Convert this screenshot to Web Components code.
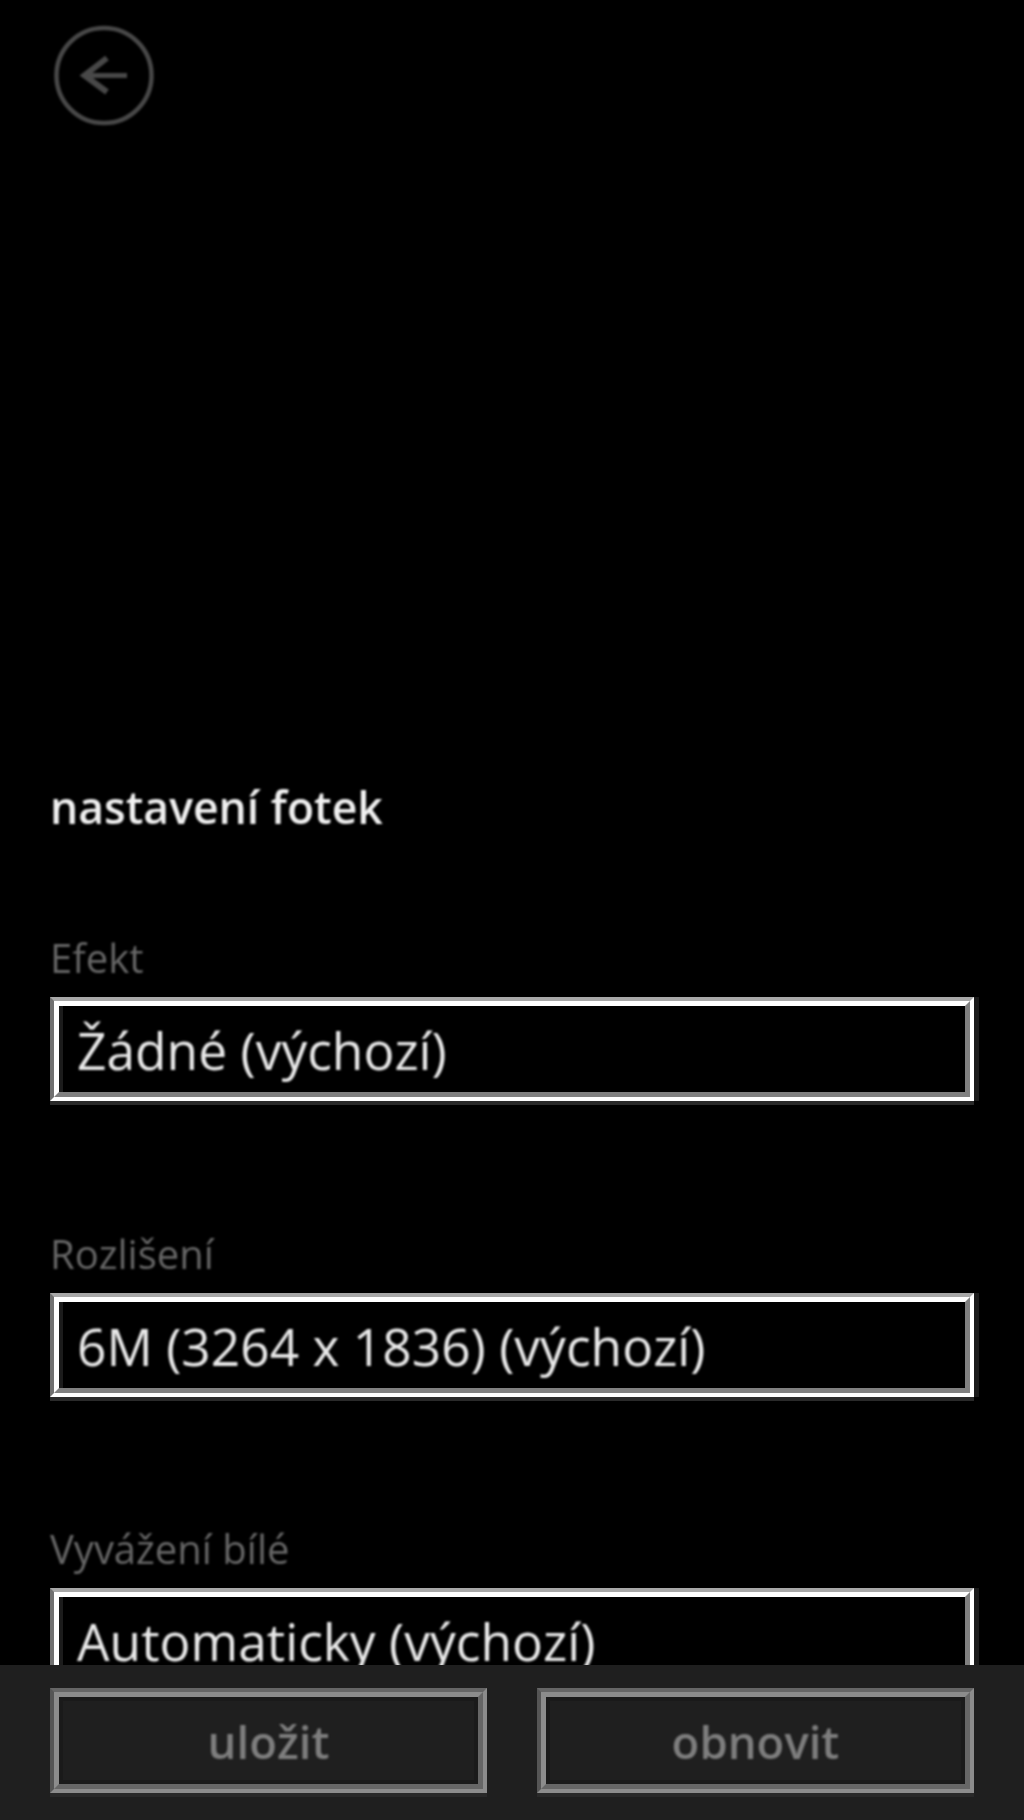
<!DOCTYPE html>
<html lang="cs">
<head>
<meta charset="utf-8">
<title>nastavení fotek</title>
<style>
html,body{margin:0;padding:0;background:#000;}
body{font-family:"Open Sans","Noto Sans",sans-serif;}
</style>
</head>
<body>
<settings-page>
  <back-button slot="header"></back-button>
  <page-title slot="title">nastavení fotek</page-title>
  <select-field slot="fields" label="Efekt">Žádné (výchozí)</select-field>
  <select-field slot="fields" label="Rozlišení">6M (3264 x 1836) (výchozí)</select-field>
  <select-field slot="fields" label="Vyvážení bílé">Automaticky (výchozí)</select-field>
  <app-button slot="actions">uložit</app-button>
  <app-button slot="actions">obnovit</app-button>
</settings-page>
<script>
function define(name, html, attrs){
  customElements.define(name, class extends HTMLElement{
    constructor(){
      super();
      this.attachShadow({mode:'open'}).innerHTML = html;
    }
    connectedCallback(){
      if(attrs) attrs(this);
    }
  });
}
define('settings-page', `
<style>
:host{display:flex;flex-direction:column;width:1024px;height:1820px;overflow:hidden;background:#000;}
.scroll{flex:0 0 1665px;height:1665px;overflow:hidden;padding:0 50px;box-sizing:border-box;}
.head{height:25px;}
.fields{display:flex;flex-direction:column;}
.bar{flex:1;background:#1f1f1f;box-sizing:border-box;padding:23px 50px 0;display:flex;gap:50px;align-items:flex-start;}
</style>
<div class="scroll">
  <div class="head"></div>
  <slot name="header"></slot>
  <slot name="title"></slot>
  <div class="fields"><slot name="fields"></slot></div>
</div>
<div class="bar"><slot name="actions"></slot></div>
`);
define('back-button', `
<style>
:host{display:block;width:102px;height:102px;margin:0 0 0 3px;}
svg{display:block;filter:blur(.8px);}
</style>
<svg width="102" height="102" viewBox="0 0 102 102" fill="none" stroke="#484848" stroke-width="4.5">
  <circle cx="51" cy="50.5" r="47.5"/>
  <path d="M30 50.5H74" stroke-width="5"/>
  <path d="M54 33L31.5 50.5L54 67" stroke-width="6"/>
</svg>
`);
define('page-title', `
<style>
:host{display:block;height:810px;box-sizing:border-box;padding-top:654.5px;}
div{font:600 44.5px/50px "Open Sans","Noto Sans",sans-serif;color:#f0f0f0;white-space:nowrap;filter:blur(.8px);}
</style>
<div><slot></slot></div>
`);
define('select-field', `
<style>
:host{display:block;height:295.5px;}
.label{height:60px;box-sizing:border-box;font:400 40px/41px "Open Sans","Noto Sans",sans-serif;color:#666;white-space:nowrap;filter:blur(.9px);}
.outer{height:104px;box-sizing:border-box;border:4px solid;border-color:#a8a8a8 #fff #fff #707070;box-shadow:5px 0 0 #1a1a1a,0 4px 0 #2a2a2a;}
.inner{height:100%;box-sizing:border-box;border:5px solid;border-color:#fff #808080 #808080 #fff;padding-left:18px;font:400 51.5px/88px "Open Sans","Noto Sans",sans-serif;color:#e8e8e8;white-space:nowrap;box-shadow:inset 4px 0 0 #1c1c1c;}
.text{display:block;filter:blur(.8px);}
</style>
<div class="label" id="l"></div>
<div class="outer"><div class="inner"><span class="text"><slot></slot></span></div></div>
`, el=>{ el.shadowRoot.getElementById('l').textContent = el.getAttribute('label'); });
define('app-button', `
<style>
:host{display:block;flex:1;height:105px;box-sizing:border-box;border:4px solid;border-color:#666 #8c8c8c #8c8c8c #555;box-shadow:0 4px 0 #292929;}
.inner{height:100%;box-sizing:border-box;border:5px solid;border-color:#8c8c8c #666 #666 #8c8c8c;display:flex;justify-content:center;align-items:center;padding-top:2px;font:600 45.5px/1 "Open Sans","Noto Sans",sans-serif;color:#7e7e7e;box-shadow:inset 0 0 0 4px #1a1a1a;}
span{filter:blur(.9px);display:block;}
</style>
<div class="inner"><span><slot></slot></span></div>
`);
</script>
</body>
</html>
